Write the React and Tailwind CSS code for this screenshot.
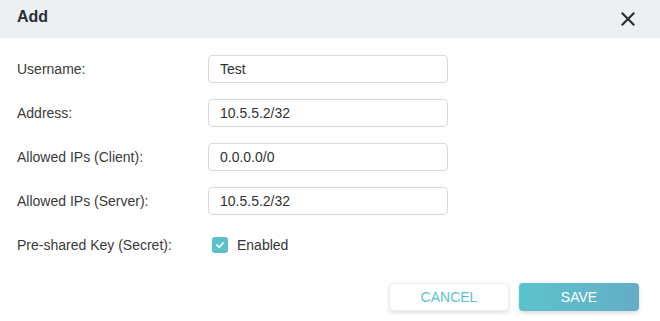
import React, { useState } from 'react';

const fields = [
  { label: 'Username:', value: 'Test' },
  { label: 'Address:', value: '10.5.5.2/32' },
  { label: 'Allowed IPs (Client):', value: '0.0.0.0/0' },
  { label: 'Allowed IPs (Server):', value: '10.5.5.2/32' },
];

const App = () => {
  const [enabled, setEnabled] = useState(true);

  return (
    <div className="w-[660px] h-[321px] bg-white text-[#333] font-['Liberation_Sans',Arial,sans-serif] overflow-hidden">
      {/* HEADER */}
      <div className="h-[38px] bg-[#edf0f3] flex items-center justify-between pl-[17px] pr-[25px]">
        <h2 className="text-[16px] font-bold text-[#2b2f33] mb-[4px]">Add</h2>
        <button className="w-[14px] h-[14px] flex items-center justify-center text-[#2b2f33]">
          <svg width="14" height="14" viewBox="0 0 14 14" fill="none" stroke="currentColor" strokeWidth="2.2" strokeLinecap="square">
            <path d="M1.5 1.5 L12.5 12.5 M12.5 1.5 L1.5 12.5" />
          </svg>
        </button>
      </div>

      {/* FORM */}
      <div className="pt-[17px] pl-[17px] flex flex-col gap-4">
        {fields.map((f) => (
          <div key={f.label} className="flex items-center h-[28px]">
            <label className="w-[191px] text-[14px] text-[#3a3a3a]">{f.label}</label>
            <input
              type="text"
              defaultValue={f.value}
              className="w-[240px] h-[28px] px-[11px] text-[14px] text-[#333] border border-[#d9d9d9] rounded-[4px] bg-white focus:outline-none"
            />
          </div>
        ))}

        <div className="flex items-center h-[28px]">
          <label className="w-[195px] text-[14px] text-[#3a3a3a]">Pre-shared Key (Secret):</label>
          <button
            type="button"
            onClick={() => setEnabled(!enabled)}
            className="flex items-center gap-[9px] text-[14px] text-[#333]"
          >
            <span className="w-[16px] h-[16px] rounded-[3px] bg-[#5bc0cc] flex items-center justify-center">
              {enabled && (
                <svg width="10" height="10" viewBox="0 0 10 10" fill="none" stroke="white" strokeWidth="1.8" strokeLinecap="round" strokeLinejoin="round">
                  <path d="M2 5.2 L4.2 7.3 L8 3" />
                </svg>
              )}
            </span>
            Enabled
          </button>
        </div>
      </div>

      {/* ACTIONS */}
      <div className="flex justify-end gap-[10px] pr-[21px] mt-[24px]">
        <button className="w-[120px] h-[28px] rounded-[4px] bg-white border border-[#e6eef0] text-[#5bc2cc] text-[14px] shadow-[0_2px_4px_rgba(0,0,0,0.12)]">
          CANCEL
        </button>
        <button className="w-[120px] h-[28px] rounded-[4px] bg-gradient-to-r from-[#5bc3cc] to-[#64adc6] text-white text-[14px] shadow-[0_2px_4px_rgba(0,0,0,0.15)]">
          SAVE
        </button>
      </div>
    </div>
  );
};

export default App;
